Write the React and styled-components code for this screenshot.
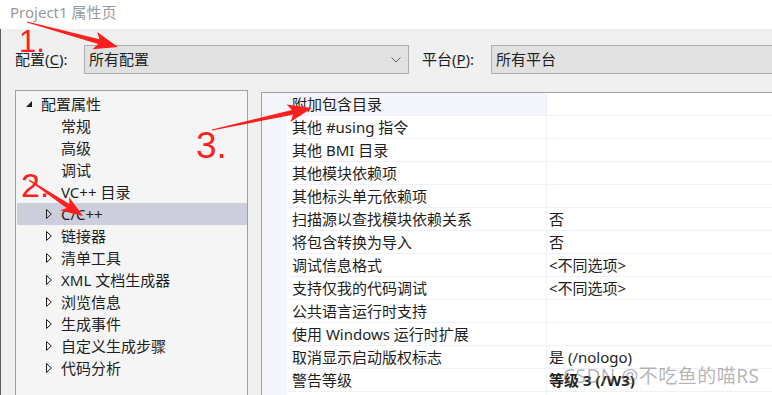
import React from "react";
import styled, { createGlobalStyle } from "styled-components";

const GlobalStyle = createGlobalStyle`
  html, body {
    margin: 0;
    padding: 0;
    background: #f0f0f0;
  }
  body {
    font-family: "Noto Sans", "Noto Sans CJK SC", sans-serif;
    color: #1e1e1e;
  }
`;

const treeItems = [
  { label: "配置属性", level: 0, state: "open" },
  { label: "常规", level: 1 },
  { label: "高级", level: 1 },
  { label: "调试", level: 1 },
  { label: "VC++ 目录", level: 1 },
  { label: "C/C++", level: 1, state: "closed", selected: true },
  { label: "链接器", level: 1, state: "closed" },
  { label: "清单工具", level: 1, state: "closed" },
  { label: "XML 文档生成器", level: 1, state: "closed" },
  { label: "浏览信息", level: 1, state: "closed" },
  { label: "生成事件", level: 1, state: "closed" },
  { label: "自定义生成步骤", level: 1, state: "closed" },
  { label: "代码分析", level: 1, state: "closed" },
];

const props = [
  { name: "附加包含目录", value: "", current: true },
  { name: "其他 #using 指令", value: "" },
  { name: "其他 BMI 目录", value: "" },
  { name: "其他模块依赖项", value: "" },
  { name: "其他标头单元依赖项", value: "" },
  { name: "扫描源以查找模块依赖关系", value: "否" },
  { name: "将包含转换为导入", value: "否" },
  { name: "调试信息格式", value: "<不同选项>" },
  { name: "支持仅我的代码调试", value: "<不同选项>" },
  { name: "公共语言运行时支持", value: "" },
  { name: "使用 Windows 运行时扩展", value: "" },
  { name: "取消显示启动版权标志", value: "是 (/nologo)" },
  { name: "警告等级", value: "等级 3 (/W3)", bold: true },
  { name: "", value: "" },
];

// builds a tapering arrow polygon from tail to tip
const arrowPoints = (x1, y1, x2, y2, head = 22, hw = 9, w0 = 1, w1 = 5) => {
  const dx = x2 - x1;
  const dy = y2 - y1;
  const len = Math.hypot(dx, dy);
  const ux = dx / len;
  const uy = dy / len;
  const nx = -uy;
  const ny = ux;
  const bx = x2 - ux * (head - 4);
  const by = y2 - uy * (head - 4);
  const hx = x2 - ux * head;
  const hy = y2 - uy * head;
  const pts = [
    [x1 + (nx * w0) / 2, y1 + (ny * w0) / 2],
    [bx + (nx * w1) / 2, by + (ny * w1) / 2],
    [hx + nx * hw, hy + ny * hw],
    [x2, y2],
    [hx - nx * hw, hy - ny * hw],
    [bx - (nx * w1) / 2, by - (ny * w1) / 2],
    [x1 - (nx * w0) / 2, y1 - (ny * w0) / 2],
  ];
  return pts.map((p) => p.map((v) => v.toFixed(1)).join(",")).join(" ");
};

const App = () => {
  return (
    <Window>
      <GlobalStyle />
      <TitleBar>Project1 属性页</TitleBar>
      <Body>
        <ConfigRow>
          <Label>
            配置(<u>C</u>):
          </Label>
          <Select $width="325px">
            <span>所有配置</span>
            <svg width="10" height="6" viewBox="0 0 10 6">
              <polyline points="0.5,0.5 5,5 9.5,0.5" fill="none" stroke="#606060" strokeWidth="1" />
            </svg>
          </Select>
          <Label $left="13px">
            平台(<u>P</u>):
          </Label>
          <Select $grow>
            <span>所有平台</span>
          </Select>
        </ConfigRow>
        <Main>
          <Tree>
            {treeItems.map((item) => (
              <TreeRow key={item.label} $level={item.level} $selected={item.selected}>
                <Toggle>
                  {item.state === "open" && (
                    <svg width="6" height="6" viewBox="0 0 6 6">
                      <polygon points="6,0 6,6 0,6" fill="#1e1e1e" />
                    </svg>
                  )}
                  {item.state === "closed" && (
                    <svg width="6" height="10" viewBox="0 0 6 10">
                      <polygon points="0.5,0.5 5.3,5 0.5,9.5" fill="none" stroke="#1e1e1e" strokeWidth="1" />
                    </svg>
                  )}
                </Toggle>
                <TreeLabel>{item.label}</TreeLabel>
              </TreeRow>
            ))}
          </Tree>
          <Grid>
            {props.map((p, i) => (
              <PropRow key={i}>
                <Gutter />
                <NameCell $current={p.current}>{p.name}</NameCell>
                <ValueCell $bold={p.bold}>{p.value}</ValueCell>
              </PropRow>
            ))}
          </Grid>
        </Main>
      </Body>
      <Marks width="772" height="395" viewBox="0 0 772 395">
        <polygon points={arrowPoints(27, 22, 118, 47, 24, 9, 1, 5)} fill="#ff1f1f" />
        <polygon points={arrowPoints(29, 180, 83, 216, 22, 8, 1, 5)} fill="#ff1f1f" />
        <polygon points={arrowPoints(212, 130, 312, 108, 24, 9, 1, 5)} fill="#ff1f1f" />
        <MarkText x="19" y="52" fontSize="31">1.</MarkText>
        <MarkText x="21" y="197" fontSize="34">2.</MarkText>
        <MarkText x="196" y="158" fontSize="37">3.</MarkText>
      </Marks>
      <Watermark>CSDN @不吃鱼的喵RS</Watermark>
    </Window>
  );
};

const Window = styled.div`
  position: relative;
  width: 772px;
  height: 395px;
  overflow: hidden;
  display: flex;
  flex-direction: column;
  background: #f0f0f0;
`;

const TitleBar = styled.div`
  height: 29px;
  flex: none;
  background: #ffffff;
  padding-left: 10px;
  font-size: 15px;
  line-height: 24px;
  color: #9a9a9a;
`;

const Body = styled.div`
  flex: 1;
  display: flex;
  flex-direction: column;
  border-left: 1px solid #5c5c5c;
  padding-left: 14px;
  min-height: 0;
`;

const ConfigRow = styled.div`
  display: flex;
  align-items: center;
  margin-top: 16px;
  height: 29px;
  margin-right: -10px;
  font-size: 15px;
`;

const Label = styled.div`
  width: 69px;
  margin-left: ${(p) => p.$left || "0"};
  line-height: 29px;
  white-space: nowrap;
  u {
    text-underline-offset: 2px;
  }
`;

const Select = styled.div`
  box-sizing: border-box;
  height: 29px;
  width: ${(p) => p.$width || "auto"};
  flex: ${(p) => (p.$grow ? "1" : "none")};
  background: #e1e1e1;
  border: 1px solid #adadad;
  display: flex;
  align-items: center;
  justify-content: space-between;
  padding: 0 7px 0 4px;
  line-height: 27px;
  svg {
    display: block;
  }
`;

const Main = styled.div`
  flex: 1;
  display: flex;
  align-items: flex-start;
  margin-top: 16px;
  min-height: 0;
  font-size: 15px;
`;

const Tree = styled.div`
  box-sizing: border-box;
  width: 233px;
  height: 320px;
  flex: none;
  background: #f5f5f5;
  border: 1px solid #a0a0a0;
  padding: 2px 0 0 1px;
`;

const TreeRow = styled.div`
  display: flex;
  align-items: center;
  height: 22px;
  padding-left: ${(p) => (p.$level === 0 ? 9 : 29)}px;
  background: ${(p) => (p.$selected ? "#cccedb" : "transparent")};
`;

const Toggle = styled.div`
  width: 15px;
  flex: none;
  display: flex;
  align-items: center;
  svg {
    display: block;
  }
`;

const TreeLabel = styled.span`
  line-height: 22px;
  white-space: nowrap;
`;

const Grid = styled.div`
  box-sizing: border-box;
  flex: 1;
  height: 320px;
  margin: 2px -10px 0 13px;
  border: 1px solid #a0a0a0;
  background: #ffffff;
`;

const PropRow = styled.div`
  display: grid;
  grid-template-columns: 25px 259px 1fr;
  height: 23px;
`;

const Gutter = styled.div`
  background: #f3f5fb;
`;

const NameCell = styled.div`
  box-sizing: border-box;
  padding-left: 5px;
  line-height: 22px;
  border-bottom: 1px solid #eef1f8;
  background: ${(p) => (p.$current ? "#f3f5fb" : "#ffffff")};
  white-space: nowrap;
`;

const ValueCell = styled.div`
  box-sizing: border-box;
  padding-left: 2px;
  line-height: 22px;
  border-left: 1px solid #eef1f8;
  border-bottom: 1px solid #eef1f8;
  font-weight: ${(p) => (p.$bold ? 700 : 400)};
  white-space: nowrap;
`;

const Marks = styled.svg`
  position: absolute;
  left: 0;
  top: 0;
  pointer-events: none;
`;

const MarkText = styled.text`
  fill: #ff1f1f;
  font-family: "Liberation Sans", sans-serif;
`;

const Watermark = styled.div`
  position: absolute;
  left: 563px;
  top: 364px;
  font-size: 19px;
  letter-spacing: 0.5px;
  line-height: 24px;
  color: rgba(110, 110, 110, 0.5);
  white-space: nowrap;
  pointer-events: none;
`;

export default App;
